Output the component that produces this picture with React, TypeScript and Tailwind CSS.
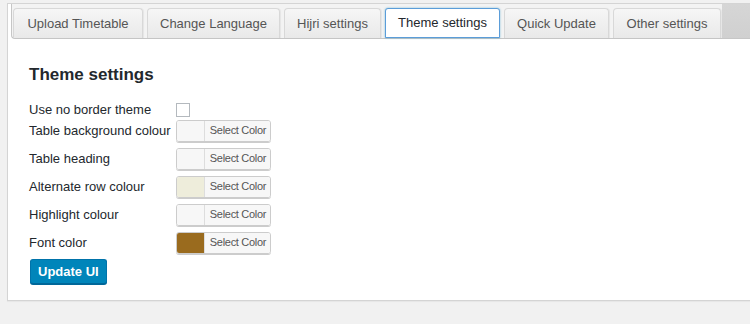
import React from "react";

const tabs = [
  { label: "Upload Timetable", w: "w-[130px]" },
  { label: "Change Language", w: "w-[133px]" },
  { label: "Hijri settings", w: "w-[97px]" },
  { label: "Theme settings", w: "w-[115px]" },
  { label: "Quick Update", w: "w-[105px]" },
  { label: "Other settings", w: "w-[108px]" },
];

const colourRows = [
  { label: "Table background colour", color: "#f7f7f7" },
  { label: "Table heading", color: "#f7f7f7" },
  { label: "Alternate row colour", color: "#eeeddb" },
  { label: "Highlight colour", color: "#f7f7f7" },
  { label: "Font color", color: "#9a6b1e" },
];

function ColorPicker({ color }: { color: string }) {
  return (
    <div className="flex h-[22px] w-[95px] overflow-hidden rounded-[3px] border border-[#cccccc] shadow-[0_1px_0_#cccccc]">
      <span className="w-[28px] border-r border-[#dddddd]" style={{ backgroundColor: color }} />
      <span className="flex flex-1 items-center justify-center bg-[#f7f7f7] pb-[2px] pl-[1px] text-[11px] tracking-[-0.3px] text-[#555555]">
        Select Color
      </span>
    </div>
  );
}

export default function App() {
  return (
    <div
      className="h-[324px] w-[750px] overflow-hidden bg-[#f1f1f1] pl-[7px] pt-[3px]"
      style={{ fontFamily: '"Liberation Sans", Arial, sans-serif' }}
    >
      <div className="h-[298px] w-[760px] border border-[#d4d4d4] bg-white shadow-[0_1px_1px_rgba(0,0,0,0.04)]">
        {/* Tab strip */}
        <div className="ml-[3px] flex h-[35px] items-end rounded-bl-[4px] border-b border-l border-[#c6c6c6] bg-[#f3f3f3] pl-[1px]">
          <div className="flex items-end gap-[4px]">
            {tabs.map((t) =>
              t.label === "Theme settings" ? (
                <div
                  key={t.label}
                  className={`${t.w} flex h-[30px] items-center justify-center rounded-t-[3px] border border-[#5b9dd9] bg-white text-[13px] text-[#23282d] shadow-[0_0_2px_rgba(30,140,190,0.6)]`}
                >
                  {t.label}
                </div>
              ) : (
                <div
                  key={t.label}
                  className={`${t.w} flex h-[30px] items-center justify-center rounded-t-[4px] border border-b-0 border-[#d8d8d8] bg-gradient-to-b from-[#f6f6f6] to-[#e9e9e9] text-[13px] text-[#555555] shadow-[1px_0_1px_rgba(0,0,0,0.06)]`}
                >
                  {t.label}
                </div>
              )
            )}
          </div>
          <div className="ml-[1px] flex-1 self-stretch bg-gradient-to-b from-[#d6d6d6] to-[#d0d0d0]" />
        </div>

        {/* Content */}
        <div className="pl-[21px] pt-[26px]">
          <h2 className="h-[20px] text-[17px] font-bold leading-[20px] text-[#23282d]">Theme settings</h2>

          <div className="mt-[17px] flex h-[15px] items-center text-[13px] text-[#23282d]">
            <span className="w-[147px]">Use no border theme</span>
            <span className="h-[14px] w-[14px] border border-[#b4b9be] bg-white" />
          </div>

          {colourRows.map((r) => (
            <div key={r.label} className="flex h-[28px] items-center text-[13px] text-[#23282d]">
              <span className="w-[147px] whitespace-nowrap">{r.label}</span>
              <ColorPicker color={r.color} />
            </div>
          ))}

          <button className="ml-[1px] mt-[2px] h-[25px] rounded-[3px] border border-[#0073aa] border-b-[#006799] bg-[#0085ba] px-[7px] text-[13px] font-bold text-white shadow-[0_1px_0_#006799]">
            Update UI
          </button>
        </div>
      </div>
    </div>
  );
}
